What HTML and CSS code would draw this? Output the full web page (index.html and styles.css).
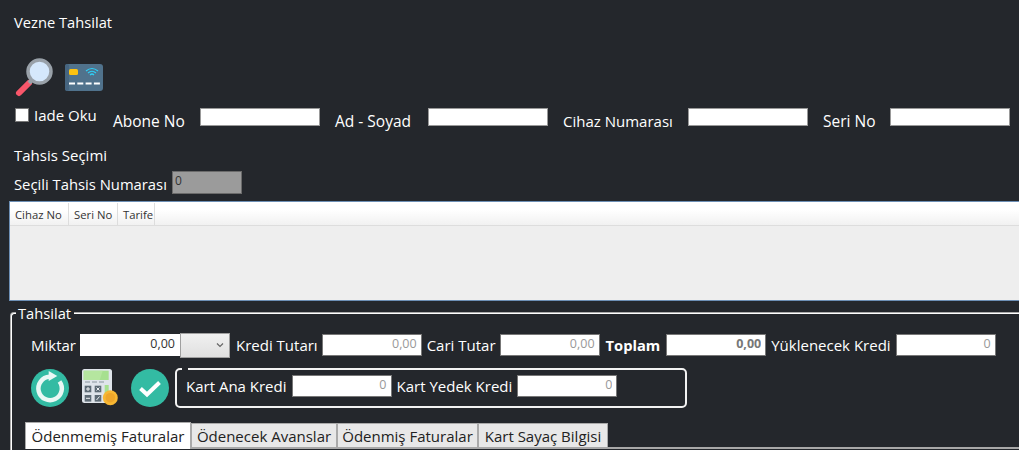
FILE: index.html
```html
<!DOCTYPE html>
<html lang="tr">
<head>
<meta charset="utf-8">
<title>Vezne Tahsilat</title>
<link rel="stylesheet" href="styles.css">
</head>
<body>
<main class="page">
  <h1 class="title">Vezne Tahsilat</h1>
  <div class="tools">
    <svg class="ico-search" viewBox="0 0 40 40" width="40" height="40" aria-hidden="true">
      <path d="M5 35 L15 25" stroke="#f9566a" stroke-width="6" stroke-linecap="round"/>
      <circle cx="25.500" cy="13.500" r="11.500" fill="#d5e8fc" stroke="#99a1a9" stroke-width="3.500"/>
      <path d="M15 25 L18 22" stroke="#99a1a9" stroke-width="4"/>
    </svg>
    <svg class="ico-card" viewBox="0 0 38 27" width="38" height="27" aria-hidden="true">
      <rect width="38" height="27" rx="3" fill="#50728c"/>
      <rect width="4" height="27" rx="2" fill="#466580"/>
      <rect x="4" y="5" width="9" height="6" rx="1.500" fill="#fdc20f"/>
      <path d="M21 7 Q27 2 33 7 M23 9 Q27 5.500 31 9 M25 11 Q27 9 29 11" fill="none" stroke="#2fd0f8" stroke-width="1.200"/>
      <path d="M4 19.500 H35" stroke="#fff" stroke-width="2" stroke-dasharray="6 2.300"/>
    </svg>
  </div>
  <div class="search-row">
    <label class="check"><span class="box"></span>Iade Oku</label>
    <div class="fields">
      <label class="lbl lbl-abone">Abone No</label><input class="inp wide" type="text">
      <label class="lbl lbl-ad">Ad - Soyad</label><input class="inp wide" type="text">
      <label class="lbl lbl-cihaz">Cihaz Numarası</label><input class="inp wide" type="text">
      <label class="lbl lbl-seri">Seri No</label><input class="inp wide" type="text">
    </div>
  </div>
  <div class="section-title">Tahsis Seçimi</div>
  <div class="selected-row">
    <label class="lbl">Seçili Tahsis Numarası</label>
    <input class="inp gray" type="text" value="0">
  </div>
  <div class="grid">
    <div class="grid-head">
      <span class="col c1">Cihaz No</span><span class="col c2">Seri No</span><span class="col c3">Tarife</span>
    </div>
  </div>
  <fieldset class="tahsilat">
    <legend class="legend">Tahsilat</legend>
    <div class="amount-row">
      <label class="lbl lbl-miktar">Miktar</label>
      <div class="combo">
        <input class="num dark" type="text" value="0,00">
        <div class="select"><svg viewBox="0 0 8 6" width="8" height="6" aria-hidden="true"><path d="M1 1.500 L4 4.500 L7 1.500" fill="none" stroke="#666" stroke-width="1.200"/></svg></div>
      </div>
      <label class="lbl tight">Kredi Tutarı</label><input class="num" type="text" value="0,00">
      <label class="lbl tight">Cari Tutar</label><input class="num" type="text" value="0,00">
      <label class="lbl strong">Toplam</label><input class="num boldnum" type="text" value="0,00">
      <label class="lbl">Yüklenecek Kredi</label><input class="num" type="text" value="0">
    </div>
    <div class="action-row">
      <svg class="act" viewBox="0 0 38 38" width="38" height="38" aria-hidden="true">
        <circle cx="19" cy="19" r="19" fill="#33bba3"/>
        <path d="M18.500 7.800 A11.700 11.700 0 1 0 28.500 12.500" fill="none" stroke="#eaf8f5" stroke-width="4.500"/>
        <path d="M17.700 2 L26.300 7 L17.700 12 Z" fill="#eaf8f5"/>
      </svg>
      <svg class="act calc" viewBox="0 0 38 38" width="38" height="38" aria-hidden="true">
        <rect x="1" y="0" width="30" height="34" rx="2.500" fill="#dfe4ea"/>
        <rect x="2.700" y="1.700" width="25" height="9.300" fill="#a6e08f"/>
        <path d="M2.700 1.700 h19 l-3 9.300 h-16 z" fill="#b5e69f"/>
        <rect x="23.700" y="16" width="4" height="11" fill="#a6e08f"/>
        <path d="M4 13 h5 M11 13 h5 M18 13 h5" stroke="#8a959e" stroke-width="1"/>
        <rect x="3.700" y="16.700" width="6.600" height="6.600" fill="#5e6b75"/>
        <rect x="13.700" y="16.700" width="6.600" height="6.600" fill="#5e6b75"/>
        <rect x="3.700" y="26" width="6.600" height="6.600" fill="#5e6b75"/>
        <rect x="13.700" y="26" width="6.600" height="6.600" fill="#5e6b75"/>
        <path d="M5 20 h4 M7 18 v4 M5 29.300 h4 M15.500 18.500 l3 3 m0 -3 l-3 3 M15.500 31 l3 -3.500" stroke="#eef1f3" stroke-width="1"/>
        <circle cx="29.300" cy="28.700" r="7.500" fill="#f7b733"/>
        <circle cx="29.300" cy="28.700" r="4.800" fill="#eea62a"/>
      </svg>
      <svg class="act" viewBox="0 0 38 38" width="38" height="38" aria-hidden="true">
        <circle cx="19" cy="19" r="19" fill="#33bba3"/>
        <path d="M9.500 19.500 L16 25.500 L28.500 13.500" fill="none" stroke="#fff" stroke-width="4"/>
      </svg>
      <fieldset class="card-box">
        <legend class="mini"></legend>
        <div class="card-row">
          <label class="lbl">Kart Ana Kredi</label><input class="num" type="text" value="0">
          <label class="lbl">Kart Yedek Kredi</label><input class="num" type="text" value="0">
        </div>
      </fieldset>
    </div>
    <div class="tabs">
      <span class="tab active">Ödenmemiş Faturalar</span>
      <span class="tab t2">Ödenecek Avanslar</span>
      <span class="tab t3">Ödenmiş Faturalar</span>
      <span class="tab t4">Kart Sayaç Bilgisi</span>
    </div>
  </fieldset>
</main>
</body>
</html>
```
FILE: styles.css
```css
* { box-sizing: border-box; }
html, body { margin: 0; height: 450px; overflow: hidden; background: #24272c; }
body { font-family: "Open Sans", "Noto Sans", sans-serif; font-size: 15px; color: #fff; }
.page { width: 1019px; height: 450px; overflow: hidden; }
.title { margin: 0; padding: 12px 0 0 14px; height: 58px; font-size: 14.700px; font-weight: 400; line-height: 20px; }
.tools { display: flex; align-items: flex-start; padding-left: 14px; height: 49px; }
.ico-card { margin: 6px 0 0 11px; }
.search-row { display: flex; height: 38px; padding-left: 15px; }
.check { display: flex; align-items: center; width: 83px; height: 16px; white-space: nowrap; }
.box { flex: none; width: 14px; height: 14px; margin-right: 5px; background: #fff; border: 1px solid #777; }
.fields { display: flex; align-items: flex-start; margin-left: 15px; }
.lbl { white-space: nowrap; line-height: 20px; }
.fields .lbl { margin-top: 4px; font-size: 15.500px; }
.lbl-abone { width: 87px; }
.lbl-ad, .lbl-cihaz, .lbl-seri { margin-left: 15px; }
.lbl-ad { width: 93px; }
.fields .lbl-cihaz { width: 125px; font-size: 15px; }
.lbl-seri { width: 67px; }
.inp { display: block; height: 18px; padding: 0 3px; border: 1px solid #999; background: #fff; font: inherit; outline: 0; }
.wide { width: 120px; margin-top: 1px; }
.section-title { padding-left: 14px; height: 20px; line-height: 20px; }
.selected-row { display: flex; align-items: flex-start; height: 29px; margin-top: 7px; padding-left: 14px; }
.selected-row .lbl { margin-top: 2px; width: 158px; font-size: 14.800px; }
.gray { width: 70px; height: 23px; padding: 0 0 5px 2px; margin-top: -1px; background: #9b9b9b; border: 1px solid #6b6b6b; color: #333; font-size: 12px; }
.grid { height: 100px; margin-left: 9px; background: #eeeeee; border: 1px solid #6d8fb5; border-right: 0; }
.grid-head { display: flex; height: 24px; background: linear-gradient(#fff 0 8px, #f1f1f1); border-bottom: 1px solid #ddd; padding-top: 1px; font-size: 11.300px; color: #333; }
.col { display: flex; align-items: center; padding-left: 5px; white-space: nowrap; border-right: 1px solid #dddddd; }
.c1 { width: 59px; }
.c2 { width: 49px; }
.c3 { width: 37px; }
.tahsilat { display: block; min-width: 0; margin: 2px -30px 0 10px; padding: 0 0 0 14px; height: 160px; border: 2px groove #fff; border-radius: 4px; }
.legend { padding: 0 3px 0 2px; margin-left: -10px; height: 20px; line-height: 20px; font-size: 14.700px; }
.amount-row { display: flex; align-items: center; height: 26px; margin-top: 9px; padding-left: 5px; }
.amount-row .lbl { margin-right: 5px; }
.amount-row .lbl-miktar { width: 44px; margin-right: 5px; }
.amount-row .tight { margin-right: 4px; }
.amount-row .strong { margin: 0 6px 0 1px; font-weight: 700; font-size: 14.700px; }
.num { flex: none; width: 100px; height: 22px; padding: 0 4px 3px 0; border: 1px solid #777; background: #fff; text-align: right; color: #999; font: 12.500px "Open Sans", sans-serif; outline: 0; margin-right: 5px; }
.dark { color: #333; margin: 0; border-color: #fff; }
.boldnum { font-weight: 700; color: #777; }
.combo { display: flex; align-items: center; margin-right: 6px; }
.select { display: flex; align-items: center; justify-content: flex-end; width: 50px; height: 25px; padding-right: 5px; background: linear-gradient(#f0f0f0, #e0e0e0); border: 1px solid #a0a0a0; }
.action-row { display: flex; align-items: flex-start; margin-top: 10px; height: 40px; padding-left: 5px; }
.act { flex: none; margin: 1px 12px 0 0; }
.calc { overflow: visible; }
.card-box { min-width: 0; width: 512px; height: 41px; margin: -1px 0 0 -6px; padding: 0 0 0 9px; border: 2px solid #f2f2f2; border-radius: 5px; }
.mini { width: 6px; height: 3px; padding: 0; margin-left: -4px; }
.card-row { display: flex; align-items: center; height: 24px; margin-top: 4px; }
.card-row .lbl { margin-right: 5px; }
.tabs { display: flex; align-items: flex-end; height: 27px; margin-top: 14px; margin-left: -1px; border-bottom: 2px solid #a8a8a8; }
.tab { display: flex; align-items: center; justify-content: center; height: 24px; background: #e8e8e8; color: #222; border: 1px solid #aaa; border-bottom: 0; font-size: 15px; white-space: nowrap; }
.active { width: 166px; height: 27px; margin-bottom: -2px; background: #fff; }
.t2 { width: 146px; }
.t3 { width: 141px; }
.t4 { width: 130px; }
```
